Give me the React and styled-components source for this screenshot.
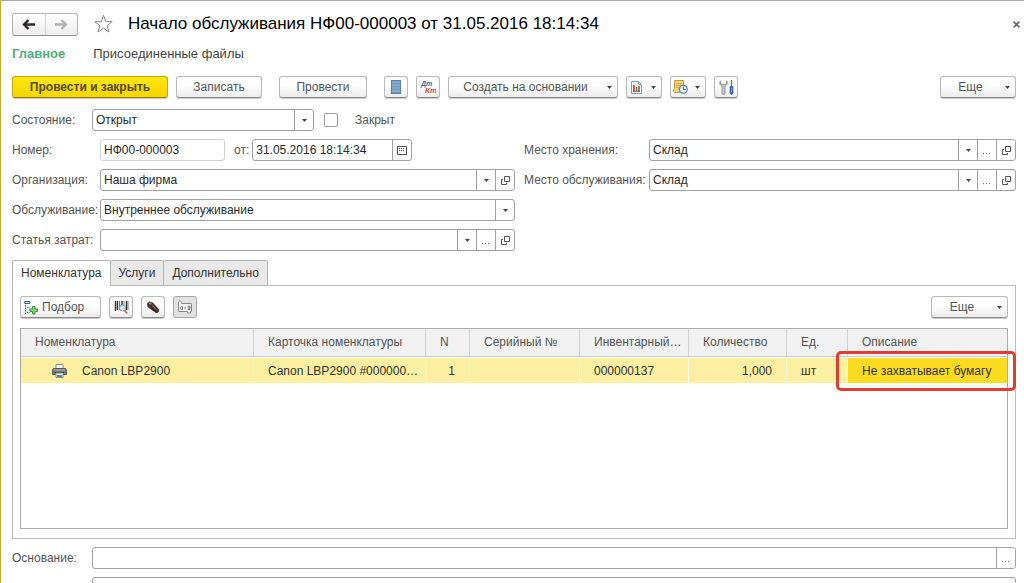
import React, { useState } from 'react'
import styled, { createGlobalStyle, css } from 'styled-components'

const GlobalStyle = createGlobalStyle`
    *, *::before, *::after {
        box-sizing: border-box;
    }

    body {
        margin: 0;
        background: #ffffff;
        color: #333333;
        font-family: "Liberation Sans", Arial, sans-serif;
        font-size: 12px;
        line-height: 16px;
    }

    button, input, select {
        margin: 0;
        font: inherit;
        color: inherit;
    }
`

const Page = styled.main`
    display: flex;
    flex-direction: column;
    height: 100vh;
    overflow: hidden;
    padding: 12px 8px 0 11px;
    border-top: 1px solid #a9a9a9;
    border-left: 1px solid #c9a92c;
`

const Header = styled.header`
    display: flex;
    flex: none;
    align-items: center;
    height: 22px;
`

const NavButtons = styled.div`
    display: flex;
    width: 66px;
    height: 23px;
    border: 1px solid #b4b4b4;
    border-bottom-color: #8f8f8f;
    border-radius: 3px;
    background: linear-gradient(#ffffff, #ececec);
`

const NavButton = styled.button`
    display: flex;
    flex: 1;
    align-items: center;
    justify-content: center;
    padding: 0;
    border: 0;
    background: none;
    color: #2e2a2c;

    & + & {
        border-left: 1px solid #d4d4d4;
    }

    &:disabled {
        color: #b0b4b2;
    }
`

const PlainButton = styled.button`
    display: flex;
    padding: 0;
    border: 0;
    background: none;
    color: #666666;
`

const StarButton = styled(PlainButton)`
    margin: 0 14px 0 15px;
`

const Title = styled.h1`
    flex: 1;
    margin: 0;
    color: #000000;
    font-size: 17px;
    font-weight: 400;
    line-height: 22px;
    white-space: nowrap;
`

const CloseButton = styled(PlainButton)`
    margin-right: -4px;
`

const Sections = styled.nav`
    display: flex;
    flex: none;
    gap: 28px;
    margin: 11px 0 14px;
    font-size: 13px;
`

const SectionLink = styled.a`
    color: ${(props) => (props.$active ? '#4fb07c' : '#444444')};
    font-weight: ${(props) => (props.$active ? 700 : 400)};
    text-decoration: none;
`

const Toolbar = styled.div`
    display: flex;
    flex: none;
    gap: 8px;
`

const Gap = styled.div`
    width: 1px;
`

const Spacer = styled.div`
    flex: 1;
`

const Button = styled.button`
    display: flex;
    align-items: center;
    justify-content: center;
    width: ${(props) => props.$width}px;
    height: 22px;
    padding: 0;
    border: 1px solid #b9b9b9;
    border-bottom-color: #8c8c8c;
    border-radius: 3px;
    background: linear-gradient(#ffffff 40%, #ececec);
    box-shadow: 0 1px 0 #c8c8c8;
    color: #555555;
    white-space: nowrap;

    ${(props) => props.$primary && css`
        border-color: #c5a60b;
        border-bottom-color: #97800c;
        background: linear-gradient(#ffe70f, #f6d500);
        color: #55491b;
        font-weight: 700;
    `}

    ${(props) => props.$pressed && css`
        border-color: #a5a5a5;
        background: #e2e2e2;
        box-shadow: none;
    `}
`

const IconButton = styled(Button)`
    width: 24px;
`

const MenuButton = styled(Button)`
    padding-right: 5px;
`

const MenuText = styled.span`
    flex: 1;
    display: flex;
    justify-content: center;
    padding-right: 5px;
`

const PickButton = styled(Button)`
    justify-content: flex-start;
    gap: 3px;
    padding-left: 3px;
`

const FieldRow = styled.div`
    display: flex;
    flex: none;
    align-items: center;
    height: 22px;
`

const Label = styled.label`
    flex: none;
    width: ${(props) => props.$width}px;
    color: #555555;
    white-space: nowrap;
`

const InlineLabel = styled(Label)`
    width: auto;
    padding: 0 3px 0 9px;
`

const StateRow = styled(FieldRow)`
    margin: 11px 0 8px;
`

const CheckBox = styled.input`
    appearance: none;
    width: 14px;
    height: 14px;
    margin: 0 17px 0 10px;
    border: 1px solid #a0a0a0;
    border-radius: 2px;
    background: #ffffff;

    &:checked {
        background: #8c8c8c;
    }
`

const Form = styled.div`
    display: grid;
    flex: none;
    grid-template-columns: 503fr 492fr;
    gap: 9px;
`

const FormColumn = styled.div`
    display: flex;
    flex-direction: column;
    gap: 8px;
`

const Box = styled.div`
    display: flex;
    flex: ${(props) => (props.$width ? 'none' : 1)};
    width: ${(props) => (props.$width ? `${props.$width}px` : 'auto')};
    min-width: 0;
    height: 22px;
    border: 1px solid ${(props) => (props.$muted ? '#d2d2d2' : '#a2a2a2')};
    border-radius: 3px;
    background: #ffffff;
`

const TextInput = styled.input`
    flex: 1;
    width: 0;
    min-width: 0;
    padding: 0 3px;
    border: 0;
    background: none;
    color: #2b2b2b;
`

const SelectWrapper = styled.div`
    display: grid;
    flex: 1;
    grid-template-columns: 1fr 19px;
    min-width: 0;
`

const Select = styled.select`
    appearance: none;
    grid-area: 1 / 1 / 2 / 3;
    min-width: 0;
    padding: 0 22px 0 3px;
    border: 0;
    background: none;
    color: #2b2b2b;
`

const cell = css`
    display: flex;
    align-items: center;
    justify-content: center;
    border: 0;
    border-left: 1px solid #a2a2a2;
`

const CaretCell = styled.span`
    ${cell}
    grid-area: 1 / 2 / 2 / 3;
    pointer-events: none;
`

const CellButton = styled.button`
    ${cell}
    width: 19px;
    padding: 0;
    background: none;
    color: #555555;
`

const Tabs = styled.div`
    display: flex;
    flex: none;
    margin-top: 9px;
`

const Tab = styled.button`
    height: 26px;
    margin-right: -1px;
    margin-bottom: -1px;
    padding: 0 8px;
    border: 1px solid #b5b5b5;
    border-bottom-color: ${(props) => (props.$active ? '#ffffff' : '#b5b5b5')};
    border-radius: 2px 2px 0 0;
    background: ${(props) => (props.$active ? '#ffffff' : '#e9e9e9')};
    color: #333333;
    z-index: 1;
`

const Panel = styled.section`
    flex: none;
    padding: 10px 7px 9px;
    border: 1px solid #bdbdbd;
`

const TableBox = styled.div`
    min-height: 201px;
    margin-top: 10px;
    border: 1px solid #ababab;
`

const Table = styled.table`
    width: 100%;
    border-collapse: separate;
    border-spacing: 0;
    table-layout: fixed;
`

const HeadCell = styled.th`
    height: 28px;
    padding: 0 4px 1px 14px;
    border-bottom: 1px solid #c9c9c9;
    border-left: 1px solid #d0d0d0;
    background: #f1f1f1;
    color: #555555;
    font-weight: 400;
    text-align: left;
    white-space: nowrap;

    &:first-child {
        border-left: 0;
    }
`

const Cell = styled.td`
    position: relative;
    height: 26px;
    padding: 0 14px;
    border-top: 1px solid #ffffff;
    border-left: 1px solid #fffbe4;
    background: ${(props) => (props.$current ? '#fbdb1f' : '#fcefa1')};
    color: #333333;
    text-align: ${(props) => (props.$right ? 'right' : 'left')};
    white-space: nowrap;

    &:first-child {
        border-left: 0;
    }
`

const ItemName = styled.div`
    display: flex;
    align-items: center;
    gap: 15px;
    padding-left: 17px;
`

const Marker = styled.div`
    position: absolute;
    inset: -7px -9px -8px -12px;
    border: 3px solid #e23c30;
    border-radius: 5px;
    pointer-events: none;
`

const Footer = styled.div`
    display: flex;
    flex: none;
    flex-direction: column;
    gap: 8px;
    margin-top: 8px;
`

const Caret = () => (
    <svg width="5" height="3" viewBox="0 0 5 3">
        <path d="M0 0h5L2.5 3z" fill="#444" />
    </svg>
)

const ArrowIcon = ({ flip }) => (
    <svg width="14" height="11" viewBox="0 0 14 11" fill="none" stroke="currentColor" strokeWidth="2.4">
        <path d={flip ? 'M1 5.5h11M7.5 1L12 5.5 7.500 10' : 'M13 5.500H2M6.500 1L2 5.500 6.500 10'} />
    </svg>
)

const StarIcon = () => (
    <svg width="21" height="20" viewBox="0 0 21 20" fill="#fff" stroke="#858585">
        <path d="M10.5 1.5l2.3 6.2h6.4l-5.1 4 1.9 6.3-5.5-3.8L5 18l1.9-6.3-5.1-4h6.4z" />
    </svg>
)

const CloseIcon = () => (
    <svg width="7" height="7" viewBox="0 0 7 7" stroke="currentColor" strokeWidth="1.6">
        <path d="M.6.6l5.8 5.8M6.4.6L.6 6.4" />
    </svg>
)

const OpenIcon = () => (
    <svg width="9" height="9" viewBox="0 0 9 9" fill="none" stroke="#555">
        <path d="M3.5.5h5v5h-5zM2 3.5H.5v5h5V7" />
    </svg>
)

const DotsIcon = () => (
    <svg width="8" height="9" viewBox="0 0 8 9" fill="#777">
        <path d="M0 7h1v1H0zM3 7h1v1H3zM6 7h1v1H6z" />
    </svg>
)

const CalendarIcon = () => (
    <svg width="10" height="9" viewBox="0 0 10 9" fill="none" stroke="#555">
        <path d="M.5.5h9v8h-9z" />
        <path d="M2 2.500h6M2 4.500h6" strokeDasharray="1 1" />
    </svg>
)

const RegisterIcon = () => (
    <svg width="10" height="14" viewBox="0 0 10 14">
        <path d="M0 0h10v14H0z" fill="#5682ae" />
        <path d="M1 2h8M1 5h8M1 8h8M1 11h8" stroke="#bcd3e8" />
        <path d="M1 3h8M1 6h8M1 9h8M1 12h8" stroke="#87abcf" />
    </svg>
)

const PostingsIcon = () => (
    <svg width="16" height="14" viewBox="0 0 16 14" fontFamily="Liberation Sans" fontWeight="700" fontStyle="italic">
        <text x="1" y="6" fontSize="7" fill="#2d6aa3">Дт</text>
        <text x="5" y="13" fontSize="8" fill="#e04a34">Кт</text>
    </svg>
)

const ReportIcon = () => (
    <svg width="11" height="13" viewBox="0 0 11 13" fill="none">
        <path d="M.5.5h7l3 3v9H.5z" fill="#f5fafd" stroke="#7d9fb8" />
        <path d="M7.5.5v3h3" stroke="#7d9fb8" />
        <path d="M2 10.5h7" stroke="#6f6f6f" />
        <path d="M3 4v6" stroke="#e02a25" strokeWidth="1.6" />
        <path d="M5.5 6v4" stroke="#2d9c4b" strokeWidth="1.6" />
        <path d="M8 5v5" stroke="#e02a25" strokeWidth="1.6" />
    </svg>
)

const ScheduleIcon = () => (
    <svg width="15" height="14" viewBox="0 0 15 14" fill="none">
        <path d="M1.5.5h9v12h-9l-1-1v-2l1-1z" fill="#f6d575" stroke="#c9983a" />
        <path d="M3 3.5h6M3 5.5h5M3 7.5h3" stroke="#d9a944" />
        <circle cx="10.3" cy="9.3" r="3.9" fill="#eef6fc" stroke="#5486b5" strokeWidth="1.3" />
        <path d="M10.3 6.5v3h2.5" stroke="#35658f" />
    </svg>
)

const ToolsIcon = () => (
    <svg width="15" height="15" viewBox="0 0 15 15" fill="none">
        <path
            d="M1.5.8C.2 2.500.5 5 3 6.200V13c0 2 3 2 3 0V6.200C8.500 5 8.800 2.500 7.500.8V3.500L6 4.500H3L1.500 3.500z"
            fill="#c6c6c6"
            stroke="#858585"
            strokeWidth=".8"
        />
        <path d="M12.5 0v6" stroke="#777" strokeWidth="1.4" />
        <path d="M11 6.5h3V13l-1 1.5h-1L11 13z" fill="#3d6cab" stroke="#2c5089" strokeWidth=".6" />
        <path d="M12.5 8v4" stroke="#8fb3dd" strokeWidth=".8" />
    </svg>
)

const PickIcon = () => (
    <svg width="15" height="15" viewBox="0 0 15 15" fill="none">
        <path d="M.7 1.5h5v2h-5z" fill="#dbeaf6" stroke="#2e6da4" />
        <path d="M1.5 5v9M3 7.5h3M3 12.5h3" stroke="#2e6da4" strokeDasharray="1.5 1" />
        <path
            d="M8.5 6.5H11V9h2.5v2.5H11V14H8.5v-2.5H6V9h2.5z"
            fill="#8ed27c"
            stroke="#3c9440"
        />
    </svg>
)

const BarcodeIcon = () => (
    <svg width="15" height="15" viewBox="0 0 15 15" fill="none">
        <path d="M1.5 1v10M3.5 1v9M8 1v5M12.5 1v9" stroke="#333" strokeWidth="1.4" />
        <path d="M5.5 1v9M10 1v4M14 1v9" stroke="#444" strokeWidth=".7" />
        <circle cx="8.5" cy="8" r="3" fill="#d9edf8" stroke="#7899aa" />
        <path d="M10.6 10.3l2.7 3.2" stroke="#c67d4a" strokeWidth="1.8" />
    </svg>
)

const ScannerIcon = () => (
    <svg width="14" height="13" viewBox="0 0 14 13" fill="none">
        <path d="M1 2.500L3.500.5l3 .8 6.500 7c1 2-.8 4-3 3.700L1.500 6z" fill="#4b3430" />
        <path d="M2.5 2.500L4 1.500l2 1-1.500 1.300z" fill="#a58a7d" />
        <path d="M6.500 4.500l4 4" stroke="#92806a" />
        <path d="M5 6.500l4.500 4" stroke="#241918" />
    </svg>
)

const CodeIcon = () => (
    <svg width="16" height="14" viewBox="0 0 16 14" fill="none" stroke="#8b8b8b">
        <path d="M1.5 2.5c0-2 3-2 3 0v1h10v8h-1V13h-3v-1.500h-9z" fill="#f2f2f2" />
        <path d="M5.5 9.5h-1a1 1.500 0 010-3h1z" stroke="#777" />
        <path d="M7 8h2" stroke="#777" />
        <path d="M10.5 6.500H13v3h-2.500M11 8h2" stroke="#777" />
    </svg>
)

const PrinterIcon = () => (
    <svg width="15" height="14" viewBox="0 0 15 14" fill="none">
        <path d="M4 .5h7v4H4z" fill="#f7f7f7" stroke="#8c8c8c" />
        <path d="M1.5 4.5h12l1 1.5v4.5H.5V6z" fill="#777" stroke="#5a5a5a" />
        <path d="M2 6h11" stroke="#b5b5b5" />
        <path d="M3 8.5h9" stroke="#333" />
        <path d="M4 9h7v4.5H4z" fill="#eef5fb" stroke="#8c8c8c" />
        <path d="M5 11h5v2H5z" fill="#4d87bd" />
    </svg>
)

const DropButton = ({ width, label, children }) => (
    <MenuButton type="button" $width={width} aria-label={label} aria-haspopup="menu">
        <MenuText>{children}</MenuText>
        <Caret />
    </MenuButton>
)

const Combo = ({ id, value, width, dots, open }) => (
    <Box $width={width}>
        <SelectWrapper>
            <Select id={id} defaultValue={value}>
                <option value={value}>{value}</option>
            </Select>
            <CaretCell><Caret /></CaretCell>
        </SelectWrapper>
        {dots && <CellButton type="button" aria-label="Выбрать"><DotsIcon /></CellButton>}
        {open && <CellButton type="button" aria-label="Открыть"><OpenIcon /></CellButton>}
    </Box>
)

const ComboRow = ({ label, labelWidth, ...combo }) => (
    <FieldRow>
        <Label htmlFor={combo.id} $width={labelWidth}>{label}</Label>
        <Combo {...combo} />
    </FieldRow>
)

const tabs = ['Номенклатура', 'Услуги', 'Дополнительно']

const columns = [
    { title: 'Номенклатура' },
    { title: 'Карточка номенклатуры', width: 172 },
    { title: 'N', width: 44 },
    { title: 'Серийный №', width: 110 },
    { title: 'Инвентарный…', width: 109 },
    { title: 'Количество', width: 98 },
    { title: 'Ед.', width: 61 },
    { title: 'Описание', width: 160 }
]

const App = () => {
    const [activeTab, setActiveTab] = useState(tabs[0])

    return (
        <>
            <GlobalStyle />
            <Page>
                <Header>
                    <NavButtons>
                        <NavButton type="button" aria-label="Назад"><ArrowIcon /></NavButton>
                        <NavButton type="button" aria-label="Вперед" disabled><ArrowIcon flip /></NavButton>
                    </NavButtons>
                    <StarButton type="button" aria-label="Избранное"><StarIcon /></StarButton>
                    <Title>Начало обслуживания НФ00-000003 от 31.05.2016 18:14:34</Title>
                    <CloseButton type="button" aria-label="Закрыть"><CloseIcon /></CloseButton>
                </Header>

                <Sections>
                    <SectionLink href="#main" $active>Главное</SectionLink>
                    <SectionLink href="#files">Присоединенные файлы</SectionLink>
                </Sections>

                <Toolbar>
                    <Button type="button" $primary $width={156}>Провести и закрыть</Button>
                    <Button type="button" $width={86}>Записать</Button>
                    <Gap />
                    <Button type="button" $width={88}>Провести</Button>
                    <Gap />
                    <IconButton type="button" aria-label="Движения документа"><RegisterIcon /></IconButton>
                    <IconButton type="button" aria-label="Проводки"><PostingsIcon /></IconButton>
                    <DropButton width={170}>Создать на основании</DropButton>
                    <DropButton width={36} label="Отчеты"><ReportIcon /></DropButton>
                    <DropButton width={36} label="Задачи"><ScheduleIcon /></DropButton>
                    <IconButton type="button" aria-label="Настройки"><ToolsIcon /></IconButton>
                    <Spacer />
                    <DropButton width={76}>Еще</DropButton>
                </Toolbar>

                <StateRow>
                    <Label htmlFor="state" $width={80}>Состояние:</Label>
                    <Combo id="state" value="Открыт" width={222} />
                    <CheckBox id="closed" type="checkbox" />
                    <Label htmlFor="closed">Закрыт</Label>
                </StateRow>

                <Form>
                    <FormColumn>
                        <FieldRow>
                            <Label htmlFor="number" $width={88}>Номер:</Label>
                            <Box $width={125} $muted>
                                <TextInput id="number" defaultValue="НФ00-000003" />
                            </Box>
                            <InlineLabel htmlFor="date">от:</InlineLabel>
                            <Box $width={160}>
                                <TextInput id="date" defaultValue="31.05.2016 18:14:34" />
                                <CellButton type="button" aria-label="Календарь"><CalendarIcon /></CellButton>
                            </Box>
                        </FieldRow>
                        <ComboRow id="company" label="Организация:" labelWidth={88} value="Наша фирма" open />
                        <ComboRow id="service" label="Обслуживание:" labelWidth={88} value="Внутреннее обслуживание" />
                        <ComboRow id="expense" label="Статья затрат:" labelWidth={88} value="" dots open />
                    </FormColumn>
                    <FormColumn>
                        <ComboRow id="storage" label="Место хранения:" labelWidth={125} value="Склад" dots open />
                        <ComboRow id="place" label="Место обслуживания:" labelWidth={125} value="Склад" dots open />
                    </FormColumn>
                </Form>

                <Tabs role="tablist">
                    {tabs.map((tab) => (
                        <Tab
                            key={tab}
                            type="button"
                            role="tab"
                            aria-selected={tab === activeTab}
                            $active={tab === activeTab}
                            onClick={() => setActiveTab(tab)}
                        >
                            {tab}
                        </Tab>
                    ))}
                </Tabs>

                <Panel>
                    <Toolbar>
                        <PickButton type="button" $width={81}><PickIcon />Подбор</PickButton>
                        <IconButton type="button" aria-label="Поиск по штрихкоду"><BarcodeIcon /></IconButton>
                        <IconButton type="button" aria-label="Терминал сбора данных"><ScannerIcon /></IconButton>
                        <IconButton type="button" aria-label="Серийные номера" $pressed><CodeIcon /></IconButton>
                        <Spacer />
                        <DropButton width={77}>Еще</DropButton>
                    </Toolbar>
                    <TableBox>
                        <Table>
                            <colgroup>
                                {columns.map(({ title, width }) => <col key={title} width={width} />)}
                            </colgroup>
                            <thead>
                                <tr>
                                    {columns.map(({ title }) => <HeadCell key={title}>{title}</HeadCell>)}
                                </tr>
                            </thead>
                            <tbody>
                                <tr>
                                    <Cell><ItemName><PrinterIcon />Canon LBP2900</ItemName></Cell>
                                    <Cell>Canon LBP2900 #000000…</Cell>
                                    <Cell $right>1</Cell>
                                    <Cell />
                                    <Cell>000000137</Cell>
                                    <Cell $right>1,000</Cell>
                                    <Cell>шт</Cell>
                                    <Cell $current>Не захватывает бумагу<Marker /></Cell>
                                </tr>
                            </tbody>
                        </Table>
                    </TableBox>
                </Panel>

                <Footer>
                    <FieldRow>
                        <Label htmlFor="basis" $width={80}>Основание:</Label>
                        <Box>
                            <TextInput id="basis" />
                            <CellButton type="button" aria-label="Выбрать"><DotsIcon /></CellButton>
                        </Box>
                    </FieldRow>
                    <FieldRow>
                        <Label $width={80} />
                        <Box><TextInput aria-label="Комментарий" /></Box>
                    </FieldRow>
                </Footer>
            </Page>
        </>
    )
}

export default App
